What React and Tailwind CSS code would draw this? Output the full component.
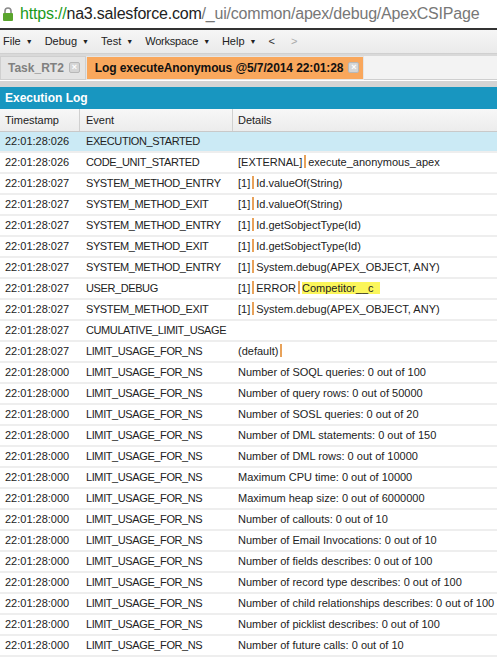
import React from 'react';

const rows = [
  ['22:01:28:026', 'EXECUTION_STARTED', ''],
  ['22:01:28:026', 'CODE_UNIT_STARTED', ['[EXTERNAL]', 'execute_anonymous_apex']],
  ['22:01:28:027', 'SYSTEM_METHOD_ENTRY', ['[1]', 'Id.valueOf(String)']],
  ['22:01:28:027', 'SYSTEM_METHOD_EXIT', ['[1]', 'Id.valueOf(String)']],
  ['22:01:28:027', 'SYSTEM_METHOD_ENTRY', ['[1]', 'Id.getSobjectType(Id)']],
  ['22:01:28:027', 'SYSTEM_METHOD_EXIT', ['[1]', 'Id.getSobjectType(Id)']],
  ['22:01:28:027', 'SYSTEM_METHOD_ENTRY', ['[1]', 'System.debug(APEX_OBJECT, ANY)']],
  ['22:01:28:027', 'USER_DEBUG', 'debug'],
  ['22:01:28:027', 'SYSTEM_METHOD_EXIT', ['[1]', 'System.debug(APEX_OBJECT, ANY)']],
  ['22:01:28:027', 'CUMULATIVE_LIMIT_USAGE', ''],
  ['22:01:28:027', 'LIMIT_USAGE_FOR_NS', ['(default)', '']],
  ['22:01:28:000', 'LIMIT_USAGE_FOR_NS', 'Number of SOQL queries: 0 out of 100'],
  ['22:01:28:000', 'LIMIT_USAGE_FOR_NS', 'Number of query rows: 0 out of 50000'],
  ['22:01:28:000', 'LIMIT_USAGE_FOR_NS', 'Number of SOSL queries: 0 out of 20'],
  ['22:01:28:000', 'LIMIT_USAGE_FOR_NS', 'Number of DML statements: 0 out of 150'],
  ['22:01:28:000', 'LIMIT_USAGE_FOR_NS', 'Number of DML rows: 0 out of 10000'],
  ['22:01:28:000', 'LIMIT_USAGE_FOR_NS', 'Maximum CPU time: 0 out of 10000'],
  ['22:01:28:000', 'LIMIT_USAGE_FOR_NS', 'Maximum heap size: 0 out of 6000000'],
  ['22:01:28:000', 'LIMIT_USAGE_FOR_NS', 'Number of callouts: 0 out of 10'],
  ['22:01:28:000', 'LIMIT_USAGE_FOR_NS', 'Number of Email Invocations: 0 out of 10'],
  ['22:01:28:000', 'LIMIT_USAGE_FOR_NS', 'Number of fields describes: 0 out of 100'],
  ['22:01:28:000', 'LIMIT_USAGE_FOR_NS', 'Number of record type describes: 0 out of 100'],
  ['22:01:28:000', 'LIMIT_USAGE_FOR_NS', 'Number of child relationships describes: 0 out of 100'],
  ['22:01:28:000', 'LIMIT_USAGE_FOR_NS', 'Number of picklist describes: 0 out of 100'],
  ['22:01:28:000', 'LIMIT_USAGE_FOR_NS', 'Number of future calls: 0 out of 10'],
];

// --- Small Orange Pipe Used As Field Separator ---
const Pipe = () => <span className="inline-block w-[2px] h-[13px] bg-[#e8a25a] mx-[2px] align-[-2px]" />;

const Details = ({ value }) => {
  if (value === 'debug') {
    return (
      <span>
        [1]<Pipe />ERROR<Pipe />
        <span className="bg-[#fbf65a] pr-[6px]">Competitor__c</span>
      </span>
    );
  }
  if (Array.isArray(value)) {
    return (
      <span>
        {value[0]}
        <Pipe />
        {value[1]}
      </span>
    );
  }
  return <span>{value}</span>;
};

const CloseIcon = () => (
  <span className="inline-flex items-center justify-center w-[11px] h-[11px] rounded-[2px] bg-[#d5d5d5] border border-[#b8b8b8] text-[9px] leading-none text-white font-bold ml-[5px] self-start mt-[5px]">
    ×
  </span>
);

const Caret = () => <span className="text-[7px] ml-[5px] text-[#222] align-[1px]">▼</span>;

export default function App() {
  return (
    <div className="w-[497px] h-[658px] overflow-hidden bg-white" style={{ fontFamily: 'Tahoma, "Liberation Sans", sans-serif' }}>
      {/* --- Address Bar --- */}
      <div className="h-[28px] flex items-center bg-white">
        <svg width="12" height="14" viewBox="0 0 12 14" className="ml-[2px] mr-[6px]">
          <path d="M3 6 V4 a3 3 0 0 1 6 0 V6" fill="none" stroke="#8a8a8a" strokeWidth="1.6" />
          <rect x="1" y="6" width="10" height="8" rx="1" fill="#5aa52e" />
        </svg>
        <span className="text-[16px] tracking-[-0.2px] whitespace-nowrap" style={{ fontFamily: '"Liberation Sans", sans-serif' }}>
          <span className="text-[#1a9a1a]">https://</span>
          <span className="text-[#222]">na3.salesforce.com</span>
          <span className="text-[#777]">/_ui/common/apex/debug/ApexCSIPage</span>
        </span>
      </div>
      <div className="h-[2px] bg-[#333]" />

      {/* --- Menu Bar --- */}
      <div className="h-[24px] flex items-center gap-[12px] px-[3px] bg-gradient-to-b from-[#f6f6f6] to-[#eaeaea] text-[11px] text-[#222] border-b border-[#d0d0d0]">
        <span>File<Caret /></span>
        <span>Debug<Caret /></span>
        <span>Test<Caret /></span>
        <span className="tracking-[-0.2px]">Workspace<Caret /></span>
        <span>Help<Caret /></span>
        <span className="text-[#333]">&lt;</span>
        <span className="text-[#aaa] ml-[4px]">&gt;</span>
      </div>

      {/* --- Tabs --- */}
      <div className="h-[26px] flex items-end bg-[#d9d9d9] pt-[2px]">
        <div className="h-[24px] flex pl-[7px] pr-[5px] items-center bg-[#e4e4e4] border border-[#cfcfcf] text-[12px] font-bold text-[#808080]">
          Task_RT2<CloseIcon />
        </div>
        <div className="h-[24px] flex pl-[8px] pr-[4px] items-center bg-[#f9a75c] border border-[#e5e5e5] text-[12px] font-bold text-[#111] tracking-[-0.1px]">
          Log executeAnonymous @5/7/2014 22:01:28<CloseIcon />
        </div>
        <div className="flex-1 h-[24px] bg-[#f3f3f3] border-b border-[#cfcfcf]" />
      </div>
      <div className="h-[6px] bg-[#d4d4d4] border-t border-white" />

      {/* --- Panel Header --- */}
      <div className="h-[23px] flex items-center px-[5px] bg-[#1896c0] text-white text-[12px] font-bold border-t border-[#d4d4d4]">
        Execution Log
      </div>

      {/* --- Table Header --- */}
      <div className="h-[23px] flex text-[11px] text-[#222] bg-gradient-to-b from-[#f7f7f7] to-[#ececec] border-b border-[#c9c9c9]">
        <div className="w-[80px] flex items-center pl-[5px] border-r border-[#d0d0d0]">Timestamp</div>
        <div className="w-[153px] flex items-center pl-[6px] border-r border-[#d0d0d0]">Event</div>
        <div className="flex-1 flex items-center pl-[5px]">Details</div>
      </div>

      {/* --- Log Rows --- */}
      {rows.map((row, i) => (
        <div
          key={i}
          className={`h-[21px] flex text-[11px] text-[#222] whitespace-nowrap border-b-2 border-[#eeeeee] ${i === 0 ? 'bg-[#cbeaf5]' : 'bg-white'}`}
        >
          <div className="w-[80px] flex items-center pl-[5px] overflow-hidden">{row[0]}</div>
          <div className="w-[153px] flex items-center pl-[6px] overflow-hidden tracking-[-0.4px]">{row[1]}</div>
          <div className="flex-1 flex items-center pl-[5px] overflow-hidden">
            <Details value={row[2]} />
          </div>
        </div>
      ))}
    </div>
  );
}
